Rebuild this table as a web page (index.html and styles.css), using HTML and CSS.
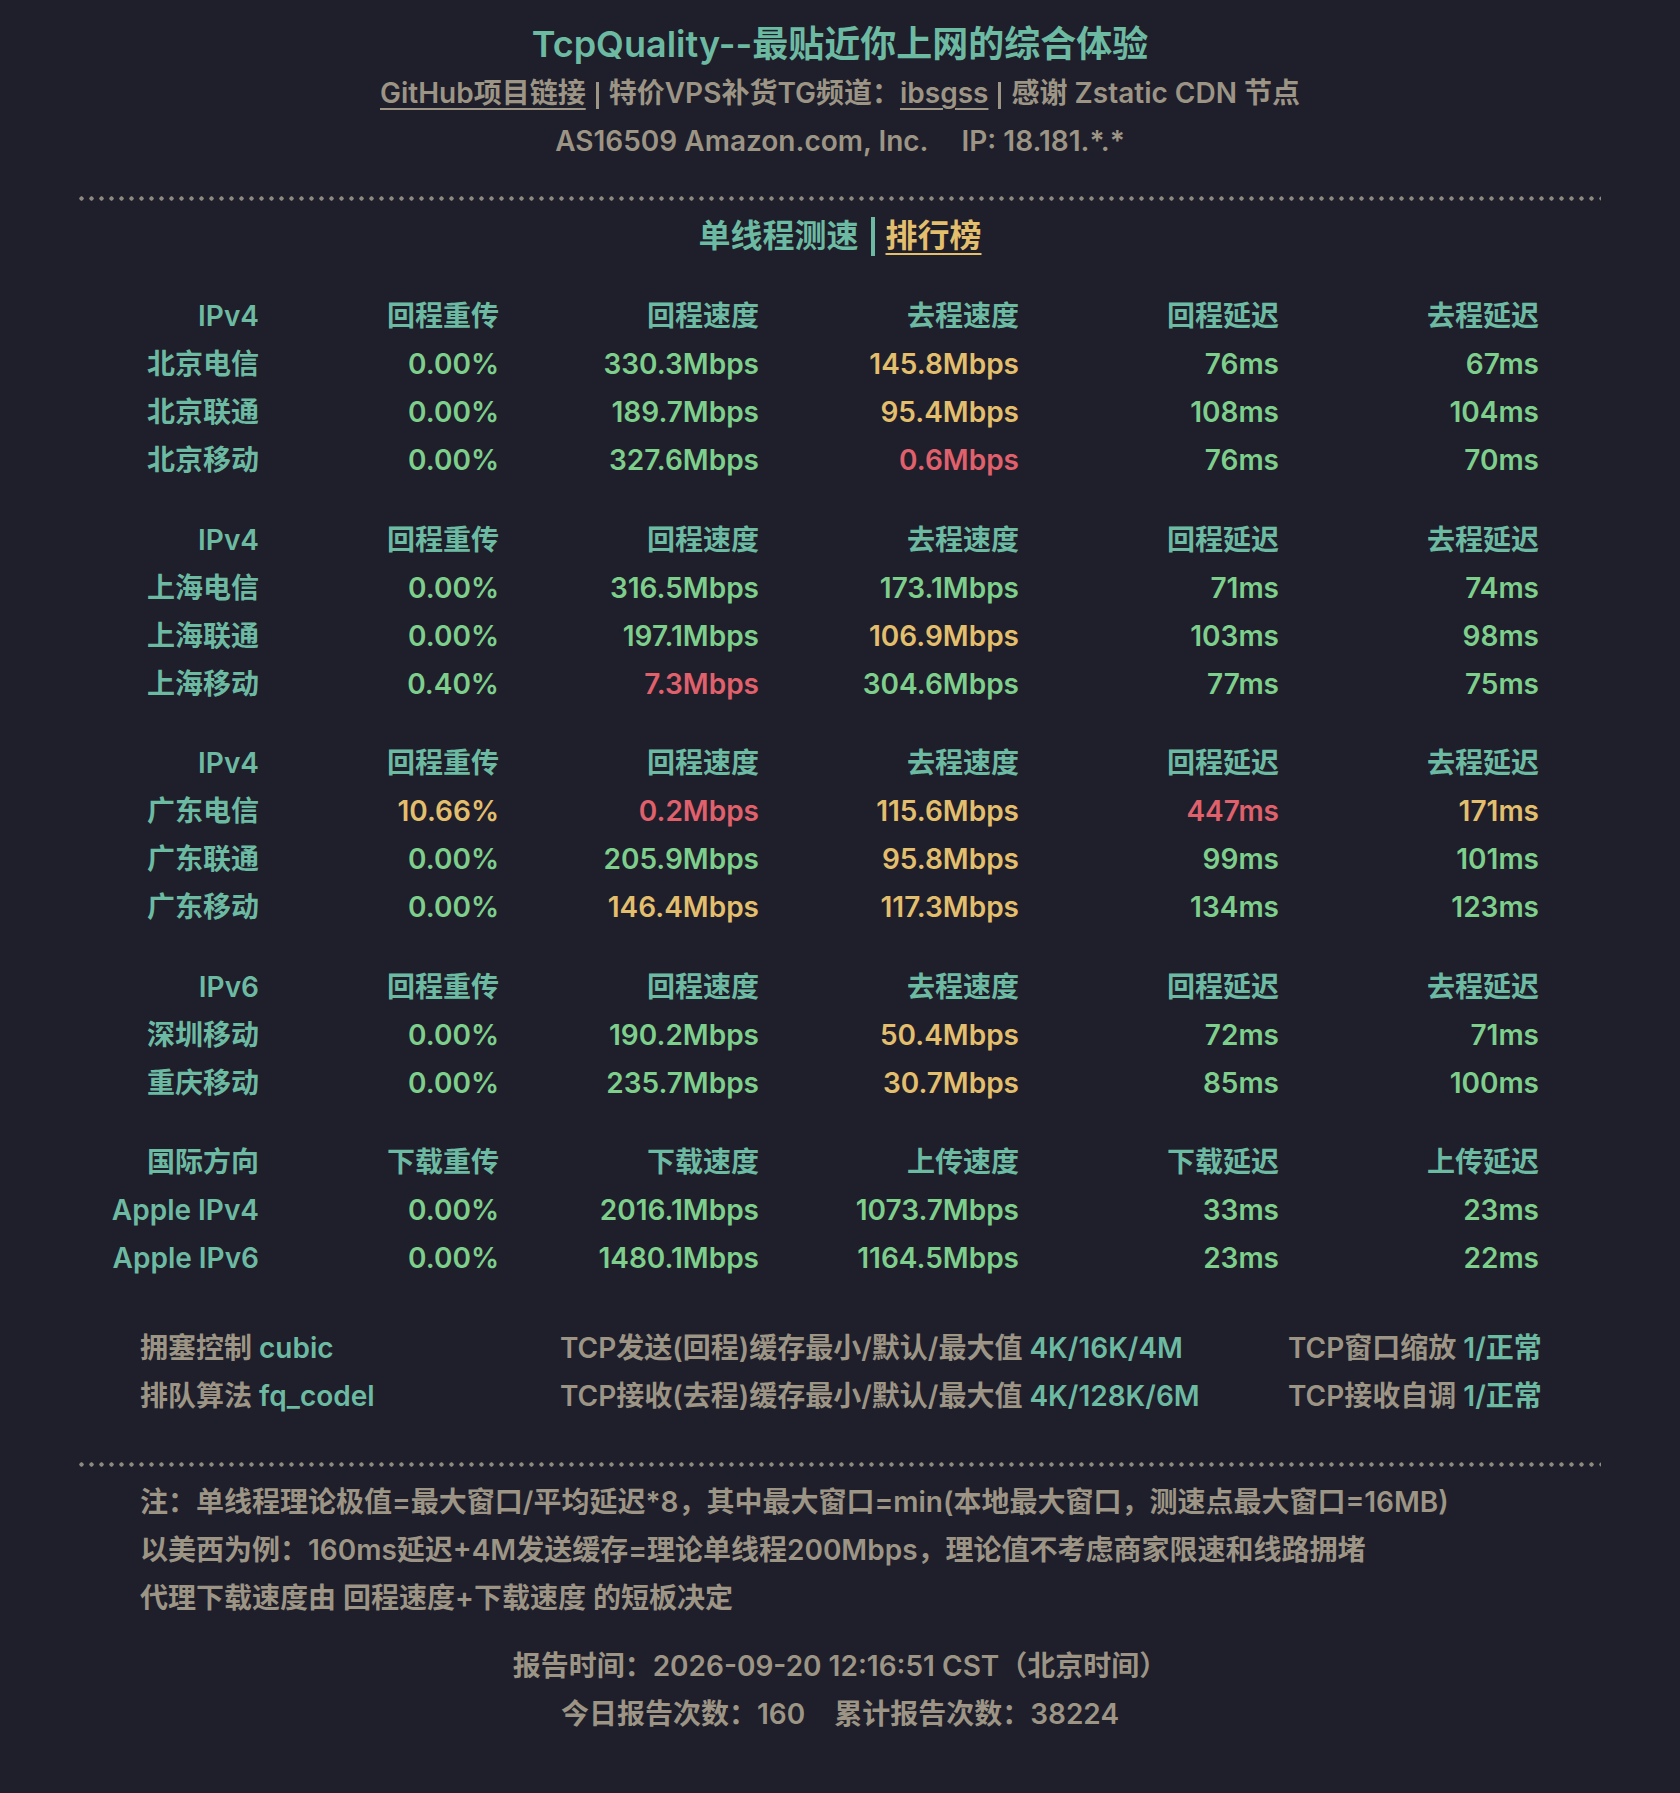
FILE: index.html
```html
<!DOCTYPE html>
<html lang="zh-CN">
<head>
<meta charset="utf-8">
<title>TcpQuality</title>
<link rel="stylesheet" href="styles.css">
</head>
<body>
<div class="page">
  <header class="head">
    <h1 class="title">TcpQuality--最贴近你上网的综合体验</h1>
    <p class="sub"><a class="link">GitHub项目链接</a><span class="bar"></span>特价VPS补货TG频道：<a class="link">ibsgss</a><span class="bar"></span>感谢 Zstatic CDN 节点</p>
    <p class="sub">AS16509 Amazon.com, Inc.<span class="gap"></span>IP: 18.181.*.*</p>
  </header>

  <div class="dots"></div>

  <h2 class="section">单线程测速<span class="bar bar-teal"></span><a class="rank">排行榜</a></h2>

  <div class="table">
    <div class="group">
      <span class="h">IPv4</span><span class="h">回程重传</span><span class="h">回程速度</span><span class="h">去程速度</span><span class="h">回程延迟</span><span class="h">去程延迟</span>
      <span class="h">北京电信</span><span class="g">0.00%</span><span class="g">330.3Mbps</span><span class="y">145.8Mbps</span><span class="g">76ms</span><span class="g">67ms</span>
      <span class="h">北京联通</span><span class="g">0.00%</span><span class="g">189.7Mbps</span><span class="y">95.4Mbps</span><span class="g">108ms</span><span class="g">104ms</span>
      <span class="h">北京移动</span><span class="g">0.00%</span><span class="g">327.6Mbps</span><span class="r">0.6Mbps</span><span class="g">76ms</span><span class="g">70ms</span>
    </div>
    <div class="group">
      <span class="h">IPv4</span><span class="h">回程重传</span><span class="h">回程速度</span><span class="h">去程速度</span><span class="h">回程延迟</span><span class="h">去程延迟</span>
      <span class="h">上海电信</span><span class="g">0.00%</span><span class="g">316.5Mbps</span><span class="g">173.1Mbps</span><span class="g">71ms</span><span class="g">74ms</span>
      <span class="h">上海联通</span><span class="g">0.00%</span><span class="g">197.1Mbps</span><span class="y">106.9Mbps</span><span class="g">103ms</span><span class="g">98ms</span>
      <span class="h">上海移动</span><span class="g">0.40%</span><span class="r">7.3Mbps</span><span class="g">304.6Mbps</span><span class="g">77ms</span><span class="g">75ms</span>
    </div>
    <div class="group">
      <span class="h">IPv4</span><span class="h">回程重传</span><span class="h">回程速度</span><span class="h">去程速度</span><span class="h">回程延迟</span><span class="h">去程延迟</span>
      <span class="h">广东电信</span><span class="y">10.66%</span><span class="r">0.2Mbps</span><span class="y">115.6Mbps</span><span class="r">447ms</span><span class="y">171ms</span>
      <span class="h">广东联通</span><span class="g">0.00%</span><span class="g">205.9Mbps</span><span class="y">95.8Mbps</span><span class="g">99ms</span><span class="g">101ms</span>
      <span class="h">广东移动</span><span class="g">0.00%</span><span class="y">146.4Mbps</span><span class="y">117.3Mbps</span><span class="g">134ms</span><span class="g">123ms</span>
    </div>
    <div class="group">
      <span class="h">IPv6</span><span class="h">回程重传</span><span class="h">回程速度</span><span class="h">去程速度</span><span class="h">回程延迟</span><span class="h">去程延迟</span>
      <span class="h">深圳移动</span><span class="g">0.00%</span><span class="g">190.2Mbps</span><span class="y">50.4Mbps</span><span class="g">72ms</span><span class="g">71ms</span>
      <span class="h">重庆移动</span><span class="g">0.00%</span><span class="g">235.7Mbps</span><span class="y">30.7Mbps</span><span class="g">85ms</span><span class="g">100ms</span>
    </div>
    <div class="group">
      <span class="h">国际方向</span><span class="h">下载重传</span><span class="h">下载速度</span><span class="h">上传速度</span><span class="h">下载延迟</span><span class="h">上传延迟</span>
      <span class="h">Apple IPv4</span><span class="g">0.00%</span><span class="g">2016.1Mbps</span><span class="g">1073.7Mbps</span><span class="g">33ms</span><span class="g">23ms</span>
      <span class="h">Apple IPv6</span><span class="g">0.00%</span><span class="g">1480.1Mbps</span><span class="g">1164.5Mbps</span><span class="g">23ms</span><span class="g">22ms</span>
    </div>
  </div>

  <div class="info">
    <span>拥塞控制 <b>cubic</b></span>
    <span>TCP发送(回程)缓存最小/默认/最大值 <b>4K/16K/4M</b></span>
    <span>TCP窗口缩放 <b>1/正常</b></span>
    <span>排队算法 <b>fq_codel</b></span>
    <span>TCP接收(去程)缓存最小/默认/最大值 <b>4K/128K/6M</b></span>
    <span>TCP接收自调 <b>1/正常</b></span>
  </div>

  <div class="dots dots-bottom"></div>

  <div class="notes">
    <p>注：单线程理论极值=最大窗口/平均延迟*8，其中最大窗口=min(本地最大窗口，测速点最大窗口=16MB)</p>
    <p>以美西为例：160ms延迟+4M发送缓存=理论单线程200Mbps，理论值不考虑商家限速和线路拥堵</p>
    <p>代理下载速度由 回程速度+下载速度 的短板决定</p>
  </div>

  <footer class="report">
    <p>报告时间：2026-09-20 12:16:51 CST（北京时间）</p>
    <p>今日报告次数：160<span class="gap gap-sm"></span>累计报告次数：38224</p>
  </footer>
</div>
</body>
</html>
```

FILE: styles.css
```css
html, body {
  margin: 0;
  padding: 0;
  background: #1f1e2b;
}

body {
  font-family: "Inter", "Noto Sans CJK SC", sans-serif;
  font-weight: 600;
  font-size: 28px;
  line-height: 48px;
  color: #9c9585;
}

p, h1, h2 {
  margin: 0;
}

.page {
  padding: 19px 79px 0;
  min-height: 1774px;
}

.head {
  text-align: center;
}

.title {
  font-size: 36px;
  line-height: 50px;
  font-weight: 600;
  color: #6dbaa2;
}

.sub {
  color: #9c9585;
}

.link {
  color: #9c9585;
  text-decoration: underline;
  text-decoration-thickness: 2px;
  text-underline-offset: 5px;
}

.bar {
  display: inline-block;
  width: 3px;
  height: 27px;
  background: #9c9585;
  margin: 0 10px;
  vertical-align: -6px;
}

.bar-teal {
  width: 4px;
  height: 39px;
  background: #6dbaa2;
  margin: 0 11px 0 12px;
  vertical-align: -9px;
}

.gap {
  display: inline-block;
  width: 33px;
}

.gap-sm {
  width: 29px;
}

.dots {
  height: 5px;
  margin-top: 31px;
  background-image: radial-gradient(circle at 2.5px 2.5px, #8e897f 1.9px, transparent 2.4px);
  background-size: 10px 5px;
  background-repeat: repeat-x;
}

.section {
  margin-top: 11px;
  text-align: center;
  font-size: 32px;
  line-height: 48px;
  font-weight: 600;
  color: #6dbaa2;
}

.rank {
  color: #e3bf6d;
  text-decoration: underline;
  text-decoration-thickness: 2px;
  text-underline-offset: 6px;
}

.table {
  margin-top: 32px;
}

.group {
  display: grid;
  grid-template-columns: 180px 240px repeat(4, 260px);
  text-align: right;
  margin-bottom: 31.5px;
}

.group:last-child {
  margin-bottom: 0;
}

.h { color: #6dbaa2; }
.g { color: #7dcf8b; }
.y { color: #e3bf6d; }
.r { color: #e0616b; }

.info {
  display: grid;
  grid-template-columns: 420px 728px auto;
  padding-left: 61px;
  margin-top: 42px;
}

.info b {
  font-weight: 600;
  color: #6dbaa2;
}

.dots-bottom {
  margin-top: 42px;
}

.notes {
  margin-top: 11px;
  padding-left: 61px;
}

.report {
  margin-top: 20px;
  text-align: center;
}
```
